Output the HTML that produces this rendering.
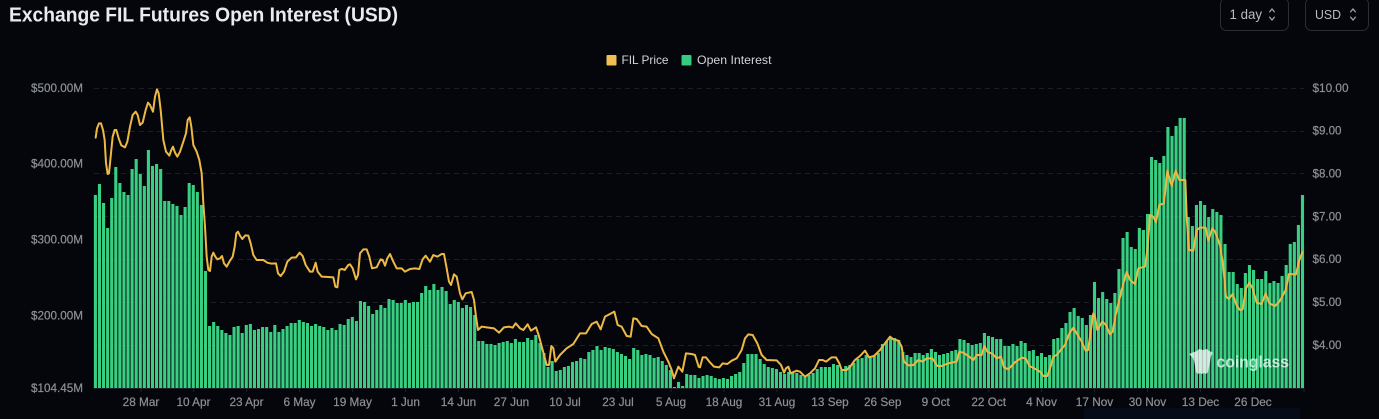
<!DOCTYPE html>
<html><head><meta charset="utf-8"><style>
html,body{margin:0;padding:0;background:#04060b;width:1379px;height:419px;overflow:hidden}
svg{display:block}
text{font-family:"Liberation Sans",sans-serif}
.a{font-size:12px;fill:#8d9094;stroke:#8d9094;stroke-width:.2}
.x{font-size:11.8px;fill:#8d9094;stroke:#8d9094;stroke-width:.2;text-anchor:middle}
.l{fill:none;stroke:#eeb845;stroke-width:6;stroke-linejoin:round;stroke-linecap:round}
.g{stroke:#1b1e23;stroke-width:1;stroke-dasharray:5 4}
</style></head><body>
<svg width="1379" height="419" viewBox="0 0 1379 419" xmlns="http://www.w3.org/2000/svg">
<defs><filter id="b" x="0" y="0" width="100%" height="100%" filterUnits="userSpaceOnUse"><feGaussianBlur stdDeviation=".35"/></filter></defs>
<rect width="1379" height="419" fill="#04060b"/>
<rect x="1084" y="408" width="216" height="11" fill="#050b17"/>

<text x="9" y="21.5" font-size="20" font-weight="700" fill="#e9ebef" textLength="389" lengthAdjust="spacingAndGlyphs">Exchange FIL Futures Open Interest (USD)</text>

<rect x="1220.5" y="-2" width="68" height="32.5" rx="6" fill="none" stroke="#2b2d32"/>
<text x="1229.5" y="19" font-size="13.5" fill="#b9bbbe" textLength="32.5" lengthAdjust="spacingAndGlyphs">1 day</text>
<path d="M1269.3 12.3l2.7-3.3 2.7 3.3M1269.3 16.7l2.7 3.3 2.7-3.3" fill="none" stroke="#a4a6a9" stroke-width="1.2"/>
<rect x="1305.5" y="-2" width="63" height="32.5" rx="6" fill="none" stroke="#2b2d32"/>
<text x="1315" y="19" font-size="13" fill="#b9bbbe" textLength="26" lengthAdjust="spacingAndGlyphs">USD</text>
<path d="M1350.3 12.3l2.7-3.3 2.7 3.3M1350.3 16.7l2.7 3.3 2.7-3.3" fill="none" stroke="#a4a6a9" stroke-width="1.2"/>

<rect x="606.5" y="55" width="10" height="10.5" rx="1" fill="#f0be52"/>
<text x="621.5" y="64" font-size="12" fill="#d2d4d6" textLength="47" lengthAdjust="spacingAndGlyphs">FIL Price</text>
<rect x="681.5" y="55" width="10" height="10.5" rx="1" fill="#35cb80"/>
<text x="697" y="64" font-size="12" fill="#d2d4d6" textLength="74.5" lengthAdjust="spacingAndGlyphs">Open Interest</text>

<g class="g">
<line x1="94" x2="1304" y1="88.5" y2="88.5"/>
<line x1="94" x2="1304" y1="131.5" y2="131.5"/>
<line x1="94" x2="1304" y1="173.5" y2="173.5"/>
<line x1="94" x2="1304" y1="216.5" y2="216.5"/>
<line x1="94" x2="1304" y1="259.5" y2="259.5"/>
<line x1="94" x2="1304" y1="302.5" y2="302.5"/>
<line x1="94" x2="1304" y1="345.5" y2="345.5"/>
</g>
<path d="M94 388.5H1304M141 388v4M193.5 388v4M246.5 388v4M299.5 388v4M352.5 388v4M405.5 388v4M458.5 388v4M511.5 388v4M565 388v4M618 388v4M671 388v4M724 388v4M777 388v4M830 388v4M882.7 388v4M935.7 388v4M988.7 388v4M1041.5 388v4M1094.5 388v4M1147.5 388v4M1200.5 388v4M1253 388v4M1304 388v4" stroke="#1e2126" fill="none"/>

<g filter="url(#b)">
<path fill="none" stroke="#37cf82" stroke-width="3.1" d="M95.4 388
v-193m4.078 193v-204m4.078 204v-185m4.078 185v-160m4.078 160v-190m4.078 190v-221m4.078 221v-205m4.078 205v-196m4.078 196v-193m4.078 193v-219m4.078 219
v-229m4.078 229v-214m4.078 214v-202m4.078 202v-238m4.078 238v-222m4.078 222v-224m4.078 224v-219m4.078 219v-187m4.078 187v-187m4.078 187v-184m4.078 184
v-182m4.078 182v-173m4.078 173v-181m4.078 181v-205m4.078 205v-203m4.078 203v-196m4.078 196v-183m4.078 183v-117m4.078 117v-62m4.078 62v-66m4.078 66
v-62m4.078 62v-58m4.078 58v-55m4.078 55v-53m4.078 53v-61m4.078 61v-62m4.078 62v-55m4.078 55v-63m4.078 63v-64m4.078 64v-58m4.078 58
v-59m4.078 59v-61m4.078 61v-61m4.078 61v-56m4.078 56v-63m4.078 63v-56m4.078 56v-59m4.078 59v-62m4.078 62v-65m4.078 65v-65m4.078 65
v-68m4.078 68v-66m4.078 66v-65m4.078 65v-62m4.078 62v-64m4.078 64v-62m4.078 62v-61m4.078 61v-58m4.078 58v-60m4.078 60v-58m4.078 58
v-64m4.078 64v-63m4.078 63v-69m4.078 69
v-71m4.078 71v-67m4.078 67v-87m4.078 87v-86m4.078 86v-82m4.078 82v-74m4.078 74v-78m4.078 78v-83m4.078 83v-80m4.078 80v-89m4.078 89
v-88m4.078 88v-85m4.078 85v-85m4.078 85v-88m4.078 88v-85m4.078 85v-86m4.078 86v-86m4.078 86v-95m4.078 95v-102m4.078 102v-98m4.078 98
v-104m4.078 104v-98m4.078 98v-101m4.078 101v-97m4.078 97v-84m4.078 84v-88m4.078 88v-86m4.078 86v-80m4.078 80v-83m4.078 83v-81m4.078 81
v-73m4.078 73v-47m4.078 47v-47m4.078 47v-44m4.078 44v-44m4.078 44v-43m4.078 43v-45m4.078 45v-46m4.078 46v-47m4.078 47v-45m4.078 45
v-49m4.078 49v-46m4.078 46v-46m4.078 46v-50m4.078 50v-48m4.078 48v-53m4.078 53v-45m4.078 45v-35m4.078 35v-21m4.078 21v-27m4.078 27
v-17m4.078 17v-18m4.078 18v-21m4.078 21v-22m4.078 22v-26m4.078 26v-27m4.078 27v-30m4.078 30v-29m4.078 29v-36m4.078 36v-38m4.078 38
v-42m4.078 42v-38m4.078 38v-41m4.078 41v-40m4.078 40v-39m4.078 39v-36m4.078 36v-34m4.078 34v-32m4.078 32v-29m4.078 29v-40m4.078 40
v-38m4.078 38v-33m4.078 33v-34m4.078 34v-33m4.078 33v-30m4.078 30v-31m4.078 31v-27m4.078 27v-23m4.078 23v-18m4.078 18v-1m4.078 1
v-6m4.078 6v-2m4.078 2v-14m4.078 14v-13m4.078 13v-13m4.078 13v-10m4.078 10
v-12m4.078 12v-13m4.078 13v-12m4.078 12v-10m4.078 10v-9m4.078 9v-10m4.078 10v-9m4.078 9v-12m4.078 12v-14m4.078 14v-16m4.078 16
v-25m4.078 25v-34m4.078 34v-34m4.078 34v-34m4.078 34v-29m4.078 29v-24m4.078 24v-21m4.078 21v-20m4.078 20v-19m4.078 19v-16m4.078 16
v-14m4.078 14v-16m4.078 16v-15m4.078 15v-15m4.078 15v-13m4.078 13v-11m4.078 11v-13m4.078 13v-15m4.078 15v-19m4.078 19v-21m4.078 21
v-21m4.078 21v-21m4.078 21v-24m4.078 24v-23m4.078 23v-18m4.078 18v-22m4.078 22v-23m4.078 23v-25m4.078 25v-29m4.078 29v-30m4.078 30
v-33m4.078 33v-31m4.078 31v-32m4.078 32v-35m4.078 35v-44m4.078 44v-47m4.078 47v-51m4.078 51v-50m4.078 50v-48m4.078 48v-36m4.078 36
v-33m4.078 33v-31m4.078 31v-35m4.078 35v-35m4.078 35v-33m4.078 33v-35m4.078 35v-39m4.078 39v-36m4.078 36v-33m4.078 33v-34m4.078 34
v-35m4.078 35v-37m4.078 37v-38m4.078 38v-49m4.078 49v-48m4.078 48v-45m4.078 45v-43m4.078 43v-44m4.078 44v-45m4.078 45v-55m4.078 55
v-52m4.078 52v-51m4.078 51v-49m4.078 49v-49m4.078 49v-42m4.078 42v-42m4.078 42v-44m4.078 44v-42m4.078 42v-47m4.078 47v-45m4.078 45
v-37m4.078 37v-38m4.078 38v-32m4.078 32v-35m4.078 35v-31m4.078 31v-33m4.078 33
v-49m4.078 49v-50m4.078 50v-60m4.078 60v-65m4.078 65v-76m4.078 76v-80m4.078 80v-72m4.078 72v-70m4.078 70v-63m4.078 63v-73m4.078 73
v-106m4.078 106v-90m4.078 90v-96m4.078 96v-89m4.078 89v-85m4.078 85v-95m4.078 95v-119m4.078 119v-150m4.078 150v-156m4.078 156v-141m4.078 141
v-139m4.078 139v-160m4.078 160v-158m4.078 158v-174m4.078 174v-231m4.078 231v-228m4.078 228v-225m4.078 225v-232m4.078 232v-261m4.078 261v-252m4.078 252
v-262m4.078 262v-270m4.078 270v-270m4.078 270v-171m4.078 171v-162m4.078 162v-183m4.078 183v-187m4.078 187v-183m4.078 183v-171m4.078 171v-179m4.078 179
v-176m4.078 176v-173m4.078 173v-144m4.078 144v-116m4.078 116v-116m4.078 116v-104m4.078 104v-100m4.078 100v-115m4.078 115v-123m4.078 123v-118m4.078 118
v-109m4.078 109v-109m4.078 109v-117m4.078 117v-105m4.078 105v-107m4.078 107v-105m4.078 105v-112m4.078 112v-123m4.078 123v-144m4.078 144v-146m4.078 146
v-163m4.078 163v-193"/>

<g transform="translate(0,70) scale(.33333)"><path class="l" d="M287 203L291 175 297 160 303 160 309 180 314 210 318 280 323 312 327 310 333 250 338 200 344 180 349 180 356 205 364 226 375 232 382 215 390 170 398 135 407 125 413 135 420 165 428 158 437 120 444 98 450 105 459 125 465 80 471 58 476 70 482 120 490 210 498 245 508 257 514 240 519 230 525 248 532 260 540 245 550 215 558 190 563 150 569 142 574 170 580 225 590 245 598 270 605 310 610 400 615 470 620 560 625 600 630 603 635 560 640 548 646 560 652 568 660 565 666 558 672 580 680 590 690 572 698 560 704 530 709 490 714 485 720 497 727 507 736 496 745 497 752 520 760 555 770 570 790 570 802 578 815 581 828 580 834 610 842 618 852 605 862 575 875 563 888 562 899 548 908 558 917 585 930 605 938 605 947 578 953 605 965 620 985 621 1000 622 1006 650 1012 652 1018 600 1026 597 1034 600 1045 585"/></g>
<g transform="translate(350,220) scale(.33333)"><path class="l" d="M-5 135L0 133 8 145 18 178 24 165 30 100 40 88 50 88 58 110 66 145 80 142 92 118 98 120 105 137 112 115 120 102 130 125 140 145 155 145 165 155 180 147 195 145 208 147 218 118 227 107 240 125 250 105 262 110 275 102 282 102 290 145 297 185 303 195 312 163 320 170 330 220 337 238 347 220 365 216 372 240 378 290 384 330 395 320 410 322 432 325 447 338 462 322 478 320 488 323 497 310 510 325 520 330 533 313 543 332 558 322 566 345 578 390 590 435 597 435 604 378 610 385 616 425 630 405 650 385 670 372 690 340 708 340 725 312 740 305 752 328 765 290 780 282 793 275 803 315 815 320 830 348 842 350 850 295 860 297 875 318 890 320 905 342 925 355 940 395 955 425 965 450 972 475 985 440 997 455 1008 400 1025 402 1035 405 1046 440"/></g>
<g transform="translate(700,280) scale(.33333)"><path class="l" d="M-4 260L0 262 8 232 18 232 28 245 42 260 58 262 68 250 82 252 95 242 110 235 125 210 135 175 145 163 158 165 172 190 185 225 200 240 230 241 243 255 252 278 258 265 265 260 272 280 290 272 300 275 315 290 330 280 345 265 357 240 368 240 378 245 395 232 408 232 418 250 425 270 440 270 452 258 465 240 480 228 495 212 507 232 522 228 540 210 555 190 570 170 580 178 595 182 605 200 612 245 625 256 640 255 655 240 668 245 680 235 697 235 712 258 725 258 745 250 770 245 778 215 790 218 805 228 820 240 830 225 845 225 853 198 862 215 878 222 890 235 903 230 912 262 925 268 945 247 965 233 977 235 988 258 1003 265 1020 275"/></g>
<g transform="translate(1040,100) scale(.33333)"><path class="l" d="M0 815L10 828 22 828 32 800 40 770 50 765 62 750 75 735 88 700 100 683 110 700 125 725 137 752 144 750 150 710 160 640 165 650 172 690 187 665 198 675 210 703 218 695 228 640 245 570 260 515 270 540 285 552 295 505 315 500 323 440 330 345 340 350 348 367 358 315 372 310 382 212 395 258 407 212 418 240 436 240 440 350 447 450 460 452 470 390 480 383 497 383 505 422 517 385 525 395 540 435 550 500 558 590 566 597 578 582 590 617 600 630 608 628 618 565 628 548 638 565 650 608 665 612 677 580 688 610 705 618 718 605 737 570 747 522 768 523 778 480 787 457"/></g>
</g>

<g fill="#fff" opacity=".72">
<path d="M1189 354l5-2 3-1 2-2 4 1 4-1 2 2 3 1 1 1-2 3-1 6-1 5-1 5-2 2-2-1-2 1-2-1-2 1-2-2-1-6-1-6-2-3z"/>
<text x="1216.5" y="367.5" font-size="17" font-weight="700" textLength="72.5" lengthAdjust="spacingAndGlyphs">coinglass</text>
</g>

<text class="a" x="31" y="92" textLength="52" lengthAdjust="spacingAndGlyphs">$500.00M</text>
<text class="a" x="31" y="167.5" textLength="52" lengthAdjust="spacingAndGlyphs">$400.00M</text>
<text class="a" x="31" y="243.5" textLength="52" lengthAdjust="spacingAndGlyphs">$300.00M</text>
<text class="a" x="31" y="319.5" textLength="52" lengthAdjust="spacingAndGlyphs">$200.00M</text>
<text class="a" x="31" y="392" textLength="52" lengthAdjust="spacingAndGlyphs">$104.45M</text>

<text class="a" x="1312.5" y="92" textLength="36" lengthAdjust="spacingAndGlyphs">$10.00</text>
<text class="a" x="1312.5" y="134.5" textLength="29" lengthAdjust="spacingAndGlyphs">$9.00</text>
<text class="a" x="1312.5" y="177.5" textLength="29" lengthAdjust="spacingAndGlyphs">$8.00</text>
<text class="a" x="1312.5" y="220.5" textLength="29" lengthAdjust="spacingAndGlyphs">$7.00</text>
<text class="a" x="1312.5" y="263" textLength="29" lengthAdjust="spacingAndGlyphs">$6.00</text>
<text class="a" x="1312.5" y="306" textLength="29" lengthAdjust="spacingAndGlyphs">$5.00</text>
<text class="a" x="1312.5" y="349" textLength="29" lengthAdjust="spacingAndGlyphs">$4.00</text>

<text class="x" x="141" y="406">28 Mar</text>
<text class="x" x="193.5" y="406">10 Apr</text>
<text class="x" x="246.5" y="406">23 Apr</text>
<text class="x" x="299.5" y="406">6 May</text>
<text class="x" x="352.5" y="406">19 May</text>
<text class="x" x="405.5" y="406">1 Jun</text>
<text class="x" x="458.5" y="406">14 Jun</text>
<text class="x" x="511.5" y="406">27 Jun</text>
<text class="x" x="565" y="406">10 Jul</text>
<text class="x" x="618" y="406">23 Jul</text>
<text class="x" x="671" y="406">5 Aug</text>
<text class="x" x="724" y="406">18 Aug</text>
<text class="x" x="777" y="406">31 Aug</text>
<text class="x" x="830" y="406">13 Sep</text>
<text class="x" x="882.7" y="406">26 Sep</text>
<text class="x" x="935.7" y="406">9 Oct</text>
<text class="x" x="988.7" y="406">22 Oct</text>
<text class="x" x="1041.5" y="406">4 Nov</text>
<text class="x" x="1094.5" y="406">17 Nov</text>
<text class="x" x="1147.5" y="406">30 Nov</text>
<text class="x" x="1200.5" y="406">13 Dec</text>
<text class="x" x="1253" y="406">26 Dec</text>
</svg>
</body></html>
